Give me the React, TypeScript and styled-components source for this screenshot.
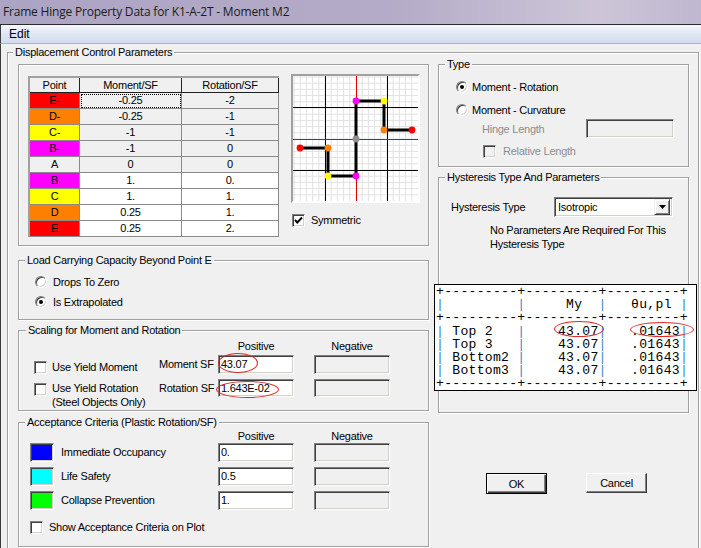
import React from 'react';
import styled, { createGlobalStyle } from 'styled-components';

const GlobalStyle = createGlobalStyle`
  html, body {
    margin: 0;
    padding: 0;
    background: #f0f0f0;
  }
  body {
    font-family: "Liberation Sans", Arial, sans-serif;
    font-size: 11px;
    letter-spacing: -0.25px;
    color: #000;
    overflow: hidden;
  }
`;

const Window = styled.div`
  width: 701px;
  height: 548px;
  overflow: hidden;
  background: #f0f0f0;
  display: flex;
  flex-direction: column;
`;

const TitleBar = styled.div`
  flex: none;
  height: 24px;
  padding-left: 3px;
  line-height: 24px;
  font-family: "Open Sans", "Liberation Sans", sans-serif;
  font-size: 12px;
  letter-spacing: -0.2px;
  color: #1c1c1c;
  background: linear-gradient(to right, #aca4c3 0%, #b3abc7 55%, #cdc5d7 85%, #bfb7cf 100%);
  border-bottom: 1px solid #2c2c30;
`;

const MenuBar = styled.div`
  flex: none;
  height: 18px;
  padding-left: 8px;
  border-left: 1px solid #3c3c3c;
  border-bottom: 1px solid #aab2c4;
  background: linear-gradient(#f6f8fc, #dfe6f3 50%, #d3dcef);
  font-size: 12px;
  letter-spacing: 0;
  line-height: 18px;
`;

const Body = styled.div`
  flex: 1;
  border-left: 1px solid #3c3c3c;
  padding-left: 6px;
  padding-top: 8px;
`;

const Group = styled.div<{ $w?: number; $h: number; $mt?: number }>`
  box-sizing: border-box;
  width: ${p => (p.$w ? `${p.$w}px` : 'auto')};
  height: ${p => p.$h}px;
  margin-top: ${p => p.$mt ?? 0}px;
  border: 1px solid #a0a0a0;
  box-shadow: inset 1px 1px 0 #fff, 1px 1px 0 #fff;
`;

const Caption = styled.div<{ $ml: number }>`
  width: fit-content;
  height: 13px;
  margin: -7px 0 0 ${p => p.$ml}px;
  padding: 0 2px;
  background: #f0f0f0;
  line-height: 13px;
  white-space: nowrap;
`;

const Columns = styled.div`
  display: flex;
  gap: 9px;
  padding: 5px 0 0 10px;
`;

const Column = styled.div<{ $w: number }>`
  width: ${p => p.$w}px;
  display: flex;
  flex-direction: column;
`;

/* ---------- table + plot panel ---------- */

const PanelRow = styled.div`
  display: flex;
  padding: 9px 0 0 9px;
`;

const Table = styled.div`
  margin-top: 2px;
  display: grid;
  grid-template-columns: 50px 102px 97px;
  border-top: 2px solid #a0a0a0;
  border-left: 2px solid #a0a0a0;
  align-self: flex-start;
`;

const Cell = styled.div<{ $bg: string; $head?: boolean; $focus?: boolean }>`
  box-sizing: border-box;
  height: ${p => (p.$head ? 15 : 16)}px;
  line-height: ${p => (p.$head ? 14 : 15)}px;
  background: ${p => p.$bg};
  border-right: 1px solid ${p => (p.$head ? '#202020' : '#8a8a8a')};
  border-bottom: 1px solid ${p => (p.$head ? '#202020' : '#8a8a8a')};
  text-align: center;
  outline: ${p => (p.$focus ? '1px dotted #000' : 'none')};
  outline-offset: -2px;
  white-space: nowrap;
`;

const PlotColumn = styled.div`
  margin-left: 12px;
  display: flex;
  flex-direction: column;
`;

const PlotFrame = styled.div`
  width: 125px;
  height: 125px;
  border: 2px solid;
  border-color: #a0a0a0 #fff #fff #a0a0a0;
  background: #fff;
`;

const CheckRow = styled.label<{ $mt?: number; $ml?: number; $gap?: number; $disabled?: boolean }>`
  display: flex;
  align-items: center;
  gap: ${p => p.$gap ?? 6}px;
  margin-top: ${p => p.$mt ?? 0}px;
  margin-left: ${p => p.$ml ?? 0}px;
  color: ${p => (p.$disabled ? '#8d8d8d' : '#000')};
  line-height: 14px;
  white-space: nowrap;
`;

const CheckBox = styled.span<{ $disabled?: boolean }>`
  flex: none;
  box-sizing: border-box;
  width: 13px;
  height: 13px;
  border: 1px solid;
  border-color: #808080 #fff #fff #808080;
  box-shadow: inset 1px 1px 0 #404040, inset -1px -1px 0 #d4d0c8;
  background: ${p => (p.$disabled ? '#f0f0f0' : '#fff')};
  display: inline-flex;
  align-items: center;
  justify-content: center;
`;

const Radio = styled.span<{ $on?: boolean }>`
  flex: none;
  box-sizing: border-box;
  width: 12px;
  height: 12px;
  border-radius: 50%;
  border: 1px solid;
  border-color: #808080 #fff #fff #808080;
  box-shadow: inset 1px 1px 0 #404040, inset -1px -1px 0 #d4d0c8;
  background: #fff;
  display: inline-flex;
  align-items: center;
  justify-content: center;
  &::after {
    content: '';
    width: 4px;
    height: 4px;
    border-radius: 50%;
    background: ${p => (p.$on ? '#000' : 'transparent')};
  }
`;

const RadioRow = styled.label<{ $h: number; $gap?: number }>`
  display: flex;
  align-items: center;
  gap: ${p => p.$gap ?? 6}px;
  height: ${p => p.$h}px;
  white-space: nowrap;
`;

const TextBox = styled.div<{ $w: number; $h?: number; $disabled?: boolean }>`
  position: relative;
  box-sizing: border-box;
  width: ${p => p.$w}px;
  height: ${p => p.$h ?? 19}px;
  border: 1px solid;
  border-color: #808080 #fff #fff #808080;
  box-shadow: inset 1px 1px 0 #404040, inset -1px -1px 0 #d4d0c8;
  background: ${p => (p.$disabled ? '#f0f0f0' : '#fff')};
  padding-left: 2px;
  line-height: ${p => (p.$h ?? 19) - 2}px;
  white-space: nowrap;
`;

const Swatch = styled.div<{ $c: string }>`
  flex: none;
  box-sizing: border-box;
  width: 24px;
  height: 19px;
  border: 1px solid;
  border-color: #808080 #fff #fff #808080;
  box-shadow: inset 1px 1px 0 #404040, inset -1px -1px 0 #d4d0c8;
  background: ${p => p.$c};
`;

const Mark = styled.span<{ $l: number; $t: number; $w: number; $h: number }>`
  position: absolute;
  left: ${p => p.$l}px;
  top: ${p => p.$t}px;
  width: ${p => p.$w}px;
  height: ${p => p.$h}px;
  box-sizing: border-box;
  border: 1px solid #e02828;
  border-radius: 50%;
  pointer-events: none;
`;

/* ---------- load / scaling / acceptance ---------- */

const RadioList = styled.div`
  padding: 5px 0 0 16px;
`;

const FieldGrid = styled.div<{ $cols: string; $rows: string; $pl: number }>`
  display: grid;
  grid-template-columns: ${p => p.$cols};
  grid-template-rows: ${p => p.$rows};
  padding-left: ${p => p.$pl}px;
`;

const ColHead = styled.div<{ $col: number }>`
  grid-column: ${p => p.$col};
  width: 76px;
  text-align: center;
  align-self: center;
  line-height: 12px;
`;

const Cellbox = styled.div<{ $col?: number; $align?: string }>`
  grid-column: ${p => p.$col ?? 'auto'};
  display: flex;
  align-items: ${p => p.$align ?? 'center'};
  gap: 7px;
  white-space: nowrap;
`;

const FieldLabel = styled.span`
  line-height: 19px;
`;

const TwoLine = styled.div`
  line-height: 14px;
  margin-top: -2px;
`;

/* ---------- right column ---------- */

const TypeBody = styled.div`
  padding: 6px 0 0 17px;
  display: flex;
  flex-direction: column;
`;

const HingeRow = styled.div`
  display: flex;
  align-items: center;
  height: 19px;
  padding-left: 26px;
  color: #8d8d8d;
`;

const HingeLabel = styled.span`
  width: 104px;
`;

const HystRow = styled.div`
  display: flex;
  align-items: center;
  margin: 13px 0 0 12px;
`;

const HystLabel = styled.span`
  width: 103px;
`;

const Combo = styled.div`
  box-sizing: border-box;
  width: 119px;
  height: 20px;
  border: 1px solid;
  border-color: #808080 #fff #fff #808080;
  box-shadow: inset 1px 1px 0 #404040, inset -1px -1px 0 #d4d0c8;
  background: #fff;
  display: flex;
  align-items: center;
  padding: 2px 2px 2px 3px;
`;

const ComboText = styled.span`
  flex: 1;
`;

const ComboButton = styled.span`
  box-sizing: border-box;
  width: 16px;
  height: 16px;
  background: #f0f0f0;
  border: 1px solid;
  border-color: #f0f0f0 #404040 #404040 #f0f0f0;
  box-shadow: inset 1px 1px 0 #fff, inset -1px -1px 0 #808080;
  display: flex;
  align-items: center;
  justify-content: center;
`;

const Note = styled.div`
  margin: 6px 0 0 51px;
  line-height: 14px;
`;

const Console = styled.div`
  position: relative;
  box-sizing: border-box;
  margin: 33px 0 0 -5px;
  width: 263px;
  height: 107px;
  border: 1px solid #000;
  background: #fff;
  padding-left: 1px;
`;

const ConsoleText = styled.pre`
  margin: 0;
  font-family: "Liberation Mono", "Courier New", monospace;
  font-size: 13.1px;
  line-height: 13.2px;
  letter-spacing: 0.27px;
  color: #000;
`;

const Bar = styled.span`
  color: #3a88c8;
`;

const ButtonRow = styled.div`
  display: flex;
  gap: 39px;
  margin: 60px 0 0 48px;
`;

const Button = styled.div<{ $default?: boolean }>`
  box-sizing: border-box;
  width: 61px;
  height: ${p => (p.$default ? 21 : 20)}px;
  border: 1px solid;
  border-color: ${p => (p.$default ? '#000' : '#fff #404040 #404040 #fff')};
  box-shadow: ${p =>
    p.$default
      ? 'inset 1px 1px 0 #fff, inset -1px -1px 0 #404040, inset -2px -2px 0 #808080'
      : 'inset -1px -1px 0 #808080'};
  background: #f0f0f0;
  display: flex;
  align-items: center;
  justify-content: center;
`;

const tableRows: [string, string, string, string, boolean][] = [
  ['E-', '#ff0000', '-0.25', '-2', false],
  ['D-', '#ff8000', '-0.25', '-1', false],
  ['C-', '#ffff00', '-1', '-1', false],
  ['B-', '#ff00ff', '-1', '0', false],
  ['A', '#f0f0f0', '0', '0', false],
  ['B', '#ff00ff', '1.', '0.', true],
  ['C', '#ffff00', '1.', '1.', true],
  ['D', '#ff8000', '0.25', '1.', true],
  ['E', '#ff0000', '0.25', '2.', true],
];

const sep = '+---------+---------+---------+';
const consoleLines = [
  sep,
  '|         |     My  |   θu,pl |',
  sep,
  '| Top 2   |    43.07|   .01643|',
  '| Top 3   |    43.07|   .01643|',
  '| Bottom2 |    43.07|   .01643|',
  '| Bottom3 |    43.07|   .01643|',
  sep,
];

const criteria = [
  { label: 'Immediate Occupancy', color: '#0000ff', value: '0.' },
  { label: 'Life Safety', color: '#00ffff', value: '0.5' },
  { label: 'Collapse Prevention', color: '#00ff00', value: '1.' },
];

const Tick = () => (
  <svg width="9" height="9" viewBox="0 0 9 9">
    <polyline points="1,4 3.3,6.5 8,1.5" fill="none" stroke="#000" strokeWidth="1.9" />
  </svg>
);

const HingePlot = () => {
  const minor: number[] = [];
  for (let k = -11; k <= 11; k++) {
    const v = 63 + k * 6.2;
    if (v > 0 && v < 125) minor.push(v);
  }
  const pts: [number, number, string][] = [
    [7, 72, '#ff0000'],
    [35, 72, '#ff8000'],
    [35, 100, '#ffff00'],
    [63, 100, '#ff00ff'],
    [63, 63, '#909090'],
    [63, 25, '#ff00ff'],
    [91, 25, '#ffff00'],
    [91, 54, '#ff8000'],
    [119, 54, '#ff0000'],
  ];
  return (
    <svg width="125" height="125" viewBox="0 0 125 125">
      {minor.map(v => (
        <g key={v}>
          <line x1={v} y1="0" x2={v} y2="125" stroke="#e2e2e2" strokeWidth="1" />
          <line x1="0" y1={v} x2="125" y2={v} stroke="#e2e2e2" strokeWidth="1" />
        </g>
      ))}
      <line x1="32.5" y1="0" x2="32.5" y2="125" stroke="#000" />
      <line x1="94.5" y1="0" x2="94.5" y2="125" stroke="#000" />
      <line x1="0" y1="31.5" x2="125" y2="31.5" stroke="#000" />
      <line x1="0" y1="94.5" x2="125" y2="94.5" stroke="#000" />
      <line x1="63.5" y1="0" x2="63.5" y2="125" stroke="#e00000" />
      <line x1="0" y1="63.5" x2="125" y2="63.5" stroke="#e00000" />
      <polyline
        points="7,72 35,72 35,100 63,100 63,25 91,25 91,54 119,54"
        fill="none"
        stroke="#000"
        strokeWidth="3"
      />
      {pts.map(([x, y, c]) => (
        <circle key={`${x}-${y}`} cx={x} cy={y} r="3.4" fill={c} />
      ))}
    </svg>
  );
};

const ConsoleLine = ({ text }: { text: string }) => {
  const parts = text.split('|');
  return (
    <>
      {parts.map((p, i) => (
        <React.Fragment key={i}>
          {i > 0 && <Bar>|</Bar>}
          {p}
        </React.Fragment>
      ))}
      {'\n'}
    </>
  );
};

export default function App() {
  return (
    <Window>
      <GlobalStyle />
      <TitleBar>Frame Hinge Property Data for K1-A-2T - Moment M2</TitleBar>
      <MenuBar>Edit</MenuBar>
      <Body>
        <Group $w={692} $h={520}>
          <Caption $ml={5}>Displacement Control Parameters</Caption>
          <Columns>
            <Column $w={411}>
              <Group $h={182}>
                <PanelRow>
                  <Table>
                    <Cell $bg="#f0f0f0" $head>Point</Cell>
                    <Cell $bg="#f0f0f0" $head>Moment/SF</Cell>
                    <Cell $bg="#f0f0f0" $head>Rotation/SF</Cell>
                    {tableRows.map(([pt, color, m, r, white], i) => (
                      <React.Fragment key={pt}>
                        <Cell $bg={color}>{pt}</Cell>
                        <Cell $bg={white ? '#fff' : '#f0f0f0'} $focus={i === 0}>{m}</Cell>
                        <Cell $bg={white ? '#fff' : '#f0f0f0'}>{r}</Cell>
                      </React.Fragment>
                    ))}
                  </Table>
                  <PlotColumn>
                    <PlotFrame>
                      <HingePlot />
                    </PlotFrame>
                    <CheckRow $mt={10} $ml={1} $gap={6}>
                      <CheckBox>
                        <Tick />
                      </CheckBox>
                      Symmetric
                    </CheckRow>
                  </PlotColumn>
                </PanelRow>
              </Group>

              <Group $h={60} $mt={14}>
                <Caption $ml={6}>Load Carrying Capacity Beyond Point E</Caption>
                <RadioList>
                  <RadioRow $h={20}>
                    <Radio />
                    Drops To Zero
                  </RadioRow>
                  <RadioRow $h={20}>
                    <Radio $on />
                    Is Extrapolated
                  </RadioRow>
                </RadioList>
              </Group>

              <Group $h={81} $mt={10}>
                <Caption $ml={7}>Scaling for Moment and Rotation</Caption>
                <FieldGrid $cols="125px 59px 96px 76px" $rows="18px 24px 30px" $pl={15}>
                  <ColHead $col={3}>Positive</ColHead>
                  <ColHead $col={4}>Negative</ColHead>
                  <Cellbox $col={1}>
                    <CheckRow $gap={5}>
                      <CheckBox />
                      Use Yield Moment
                    </CheckRow>
                  </Cellbox>
                  <Cellbox $align="flex-start">
                    <FieldLabel>Moment SF</FieldLabel>
                  </Cellbox>
                  <Cellbox $align="flex-start">
                    <TextBox $w={76}>
                      43.07
                      <Mark $l={-1} $t={-3} $w={40} $h={20} />
                    </TextBox>
                  </Cellbox>
                  <Cellbox $align="flex-start">
                    <TextBox $w={76} $disabled />
                  </Cellbox>
                  <Cellbox $col={1} $align="flex-start">
                    <CheckRow $gap={5} $mt={4} style={{ alignItems: 'flex-start' }}>
                      <CheckBox />
                      <TwoLine>
                        Use Yield Rotation
                        <br />
                        (Steel Objects Only)
                      </TwoLine>
                    </CheckRow>
                  </Cellbox>
                  <Cellbox $align="flex-start">
                    <FieldLabel>Rotation SF</FieldLabel>
                  </Cellbox>
                  <Cellbox $align="flex-start">
                    <TextBox $w={76} $h={18}>
                      1.643E-02
                      <Mark $l={-3} $t={1} $w={63} $h={17} />
                    </TextBox>
                  </Cellbox>
                  <Cellbox $align="flex-start">
                    <TextBox $w={76} $h={18} $disabled />
                  </Cellbox>
                </FieldGrid>
              </Group>

              <Group $h={125} $mt={11}>
                <Caption $ml={6}>Acceptance Criteria (Plastic Rotation/SF)</Caption>
                <FieldGrid $cols="188px 96px 76px" $rows="13px 24px 24px 24px" $pl={11}>
                  <ColHead $col={2}>Positive</ColHead>
                  <ColHead $col={3}>Negative</ColHead>
                  {criteria.map(c => (
                    <React.Fragment key={c.label}>
                      <Cellbox $col={1} $align="flex-start" style={{ paddingTop: 1 }}>
                        <Swatch $c={c.color} />
                        <FieldLabel>{c.label}</FieldLabel>
                      </Cellbox>
                      <Cellbox $align="flex-start" style={{ paddingTop: 1 }}>
                        <TextBox $w={76}>{c.value}</TextBox>
                      </Cellbox>
                      <Cellbox $align="flex-start" style={{ paddingTop: 1 }}>
                        <TextBox $w={76} $disabled />
                      </Cellbox>
                    </React.Fragment>
                  ))}
                </FieldGrid>
                <CheckRow $mt={6} $ml={11} $gap={6}>
                  <CheckBox />
                  Show Acceptance Criteria on Plot
                </CheckRow>
              </Group>
            </Column>

            <Column $w={251}>
              <Group $h={103}>
                <Caption $ml={6}>Type</Caption>
                <TypeBody>
                  <RadioRow $h={20} $gap={4} style={{ marginBottom: 3 }}>
                    <Radio $on />
                    Moment - Rotation
                  </RadioRow>
                  <RadioRow $h={19} $gap={4}>
                    <Radio />
                    Moment - Curvature
                  </RadioRow>
                  <HingeRow>
                    <HingeLabel>Hinge Length</HingeLabel>
                    <TextBox $w={88} $disabled />
                  </HingeRow>
                  <CheckRow $mt={3} $ml={27} $gap={7} $disabled style={{ height: 20 }}>
                    <CheckBox $disabled />
                    Relative Length
                  </CheckRow>
                </TypeBody>
              </Group>

              <Group $h={236} $mt={10}>
                <Caption $ml={6}>Hysteresis Type And Parameters</Caption>
                <HystRow>
                  <HystLabel>Hysteresis Type</HystLabel>
                  <Combo>
                    <ComboText>Isotropic</ComboText>
                    <ComboButton>
                      <svg width="7" height="4" viewBox="0 0 7 4">
                        <polygon points="0,0 7,0 3.5,4" fill="#000" />
                      </svg>
                    </ComboButton>
                  </Combo>
                </HystRow>
                <Note>
                  No Parameters Are Required For This
                  <br />
                  Hysteresis Type
                </Note>
                <Console>
                  <ConsoleText>
                    {consoleLines.map((l, i) => (
                      <ConsoleLine key={i} text={l} />
                    ))}
                  </ConsoleText>
                  <Mark $l={119} $t={36} $w={50} $h={16} />
                  <Mark $l={195} $t={37} $w={64} $h={15} />
                </Console>
              </Group>

              <ButtonRow>
                <Button $default>OK</Button>
                <Button>Cancel</Button>
              </ButtonRow>
            </Column>
          </Columns>
        </Group>
      </Body>
    </Window>
  );
}
